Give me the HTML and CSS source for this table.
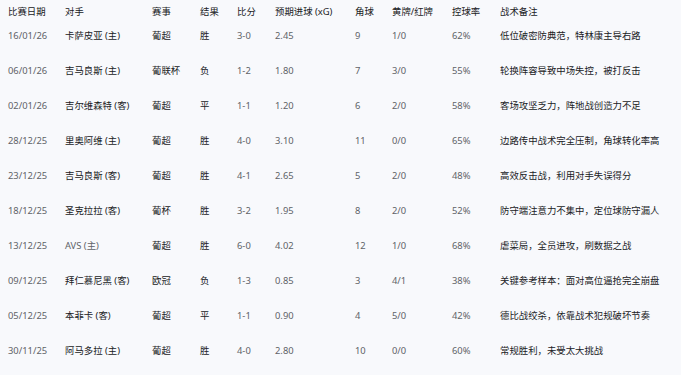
FILE: index.html
```html
<!DOCTYPE html>
<html lang="zh">
<head>
<meta charset="utf-8">
<link rel="stylesheet" href="styles.css">
</head>
<body>
<div class="card">
<table class="matches">
<thead>
<tr>
<th class="c-date">比赛日期</th>
<th class="c-opp">对手</th>
<th class="c-comp">赛事</th>
<th class="c-res">结果</th>
<th class="c-score">比分</th>
<th class="c-xg">预期进球 (xG)</th>
<th class="c-corner">角球</th>
<th class="c-cards">黄牌/红牌</th>
<th class="c-poss">控球率</th>
<th class="c-note">战术备注</th>
</tr>
</thead>
<tbody>
<tr><td class="num">16/01/26</td><td>卡萨皮亚 (主)</td><td>葡超</td><td>胜</td><td class="num">3-0</td><td class="num">2.45</td><td class="num">9</td><td class="num">1/0</td><td class="num">62%</td><td>低位破密防典范，特林康主导右路</td></tr>
<tr><td class="num">06/01/26</td><td>吉马良斯 (主)</td><td>葡联杯</td><td>负</td><td class="num">1-2</td><td class="num">1.80</td><td class="num">7</td><td class="num">3/0</td><td class="num">55%</td><td>轮换阵容导致中场失控，被打反击</td></tr>
<tr><td class="num">02/01/26</td><td>吉尔维森特 (客)</td><td>葡超</td><td>平</td><td class="num">1-1</td><td class="num">1.20</td><td class="num">6</td><td class="num">2/0</td><td class="num">58%</td><td>客场攻坚乏力，阵地战创造力不足</td></tr>
<tr><td class="num">28/12/25</td><td>里奥阿维 (主)</td><td>葡超</td><td>胜</td><td class="num">4-0</td><td class="num">3.10</td><td class="num">11</td><td class="num">0/0</td><td class="num">65%</td><td>边路传中战术完全压制，角球转化率高</td></tr>
<tr><td class="num">23/12/25</td><td>吉马良斯 (客)</td><td>葡超</td><td>胜</td><td class="num">4-1</td><td class="num">2.65</td><td class="num">5</td><td class="num">2/0</td><td class="num">48%</td><td>高效反击战，利用对手失误得分</td></tr>
<tr><td class="num">18/12/25</td><td>圣克拉拉 (客)</td><td>葡杯</td><td>胜</td><td class="num">3-2</td><td class="num">1.95</td><td class="num">8</td><td class="num">2/0</td><td class="num">52%</td><td>防守端注意力不集中，定位球防守漏人</td></tr>
<tr><td class="num">13/12/25</td><td class="num">AVS (主)</td><td>葡超</td><td>胜</td><td class="num">6-0</td><td class="num">4.02</td><td class="num">12</td><td class="num">1/0</td><td class="num">68%</td><td>虐菜局，全员进攻，刷数据之战</td></tr>
<tr><td class="num">09/12/25</td><td>拜仁慕尼黑 (客)</td><td>欧冠</td><td>负</td><td class="num">1-3</td><td class="num">0.85</td><td class="num">3</td><td class="num">4/1</td><td class="num">38%</td><td>关键参考样本：面对高位逼抢完全崩盘</td></tr>
<tr><td class="num">05/12/25</td><td>本菲卡 (客)</td><td>葡超</td><td>平</td><td class="num">1-1</td><td class="num">0.90</td><td class="num">4</td><td class="num">5/0</td><td class="num">42%</td><td>德比战绞杀，依靠战术犯规破坏节奏</td></tr>
<tr><td class="num">30/11/25</td><td>阿马多拉 (主)</td><td>葡超</td><td>胜</td><td class="num">4-0</td><td class="num">2.80</td><td class="num">10</td><td class="num">0/0</td><td class="num">60%</td><td>常规胜利，未受太大挑战</td></tr>
</tbody>
</table>
</div>
</body>
</html>
```

FILE: styles.css
```css
html, body {
  margin: 0;
  padding: 0;
  background: #ffffff;
}
body {
  font-family: "Noto Sans", "Noto Sans CJK SC", sans-serif;
  font-size: 9.4px;
  color: #202124;
}
.card {
  width: 681px;
  height: 375px;
  background: #f8f9fc;
  box-sizing: border-box;
}
.matches {
  border-collapse: collapse;
  table-layout: fixed;
  width: 681px;
}
.matches th,
.matches td {
  text-align: left;
  vertical-align: top;
  padding: 0;
  line-height: 12px;
  white-space: nowrap;
  font-weight: 400;
}
.matches th {
  height: 12px;
  padding: 6px 0 6px;
  color: #202124;
}
.matches td {
  height: 35px;
  padding-top: 6px;
  box-sizing: border-box;
}
.matches td.num {
  color: #5f6368;
}
.matches th:first-child,
.matches td:first-child {
  padding-left: 8px;
}
.c-date { width: 57px; }
.c-opp { width: 87px; }
.c-comp { width: 48px; }
.c-res { width: 37px; }
.c-score { width: 38px; }
.c-xg { width: 80px; }
.c-corner { width: 37px; }
.c-cards { width: 60px; }
.c-poss { width: 48px; }
.c-note { width: auto; }
```
